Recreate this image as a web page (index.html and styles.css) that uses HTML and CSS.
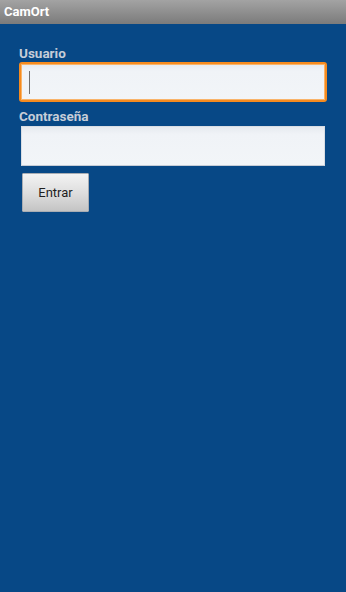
FILE: index.html
```html
<!DOCTYPE html>
<html lang="es">
<head>
<meta charset="utf-8">
<title>CamOrt</title>
<link rel="stylesheet" href="styles.css">
</head>
<body>
<header class="titlebar">CamOrt</header>
<main class="form">
  <div class="label label-user">Usuario</div>
  <div class="field field-focus"><span class="caret"></span></div>
  <div class="label label-pass">Contraseña</div>
  <div class="field field-plain"></div>
  <div class="button">Entrar</div>
</main>
</body>
</html>
```
FILE: styles.css
```css
html, body {
  margin: 0;
  padding: 0;
  height: 100%;
}
body {
  background: #074886;
  font-family: Roboto, "Liberation Sans", sans-serif;
}
.titlebar {
  height: 24px;
  line-height: 24px;
  padding-left: 4px;
  font-size: 13px;
  font-weight: bold;
  color: #ffffff;
  background: linear-gradient(#a3a3a3, #7b7b7b);
}
.form {
  display: flex;
  flex-direction: column;
  align-items: flex-start;
  padding: 22px 19px 0 19px;
}
.label {
  font-size: 13.5px;
  font-weight: bold;
  line-height: 15px;
  color: #c6cdd8;
}
.label-user {
  margin-bottom: 1px;
}
.label-pass {
  margin-top: 7px;
}
.field {
  box-sizing: border-box;
  background: linear-gradient(#e6eaef, #f0f3f7 20%, #f2f5f8);
}
.field-focus {
  width: 308px;
  height: 40px;
  border: 2px solid #f68b1f;
  border-radius: 3px;
  box-shadow: inset 0 0 0 1px #f9b46a;
  display: flex;
  align-items: center;
  padding-left: 8px;
}
.caret {
  display: block;
  width: 1px;
  height: 23px;
  background: #707070;
}
.field-plain {
  margin-top: 2px;
  margin-left: 2px;
  width: 304px;
  height: 40px;
  border: 1px solid #d8dde4;
  border-bottom-color: #c5ccd6;
}
.button {
  box-sizing: border-box;
  margin-top: 7px;
  margin-left: 3px;
  width: 67px;
  height: 39px;
  display: flex;
  align-items: center;
  justify-content: center;
  font-size: 13px;
  color: #1e1e1e;
  border: 1px solid #a9adb3;
  border-radius: 1px;
  background: linear-gradient(#f3f3f3, #dcdcdc 55%, #c4c4c4);
}
```
